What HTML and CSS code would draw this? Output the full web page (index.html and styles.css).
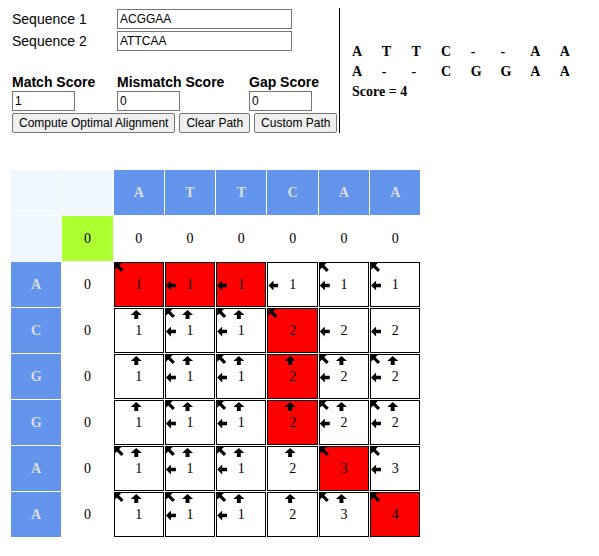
FILE: index.html
```html
<!DOCTYPE html>
<html>
<head>
<meta charset="utf-8">
<title>Sequence Alignment</title>
<link rel="stylesheet" href="styles.css">
</head>
<body>
<div class="top">
  <div class="controls">
    <div class="seqs">
      <label class="seq-label">Sequence 1</label>
      <input class="seq-input" type="text" value="ACGGAA">
      <label class="seq-label">Sequence 2</label>
      <input class="seq-input" type="text" value="ATTCAA">
    </div>
    <div class="scores">
      <div class="score-col">
        <span class="score-label">Match Score</span>
        <input class="score-input" type="text" value="1">
      </div>
      <div class="score-col">
        <span class="score-label">Mismatch Score</span>
        <input class="score-input" type="text" value="0">
      </div>
      <div class="score-col">
        <span class="score-label">Gap Score</span>
        <input class="score-input" type="text" value="0">
      </div>
    </div>
    <div class="buttons">
      <button class="btn">Compute Optimal Alignment</button>
      <button class="btn">Clear Path</button>
      <button class="btn">Custom Path</button>
    </div>
  </div>
  <div class="result">
    <div class="align">
      <span>A</span><span>T</span><span>T</span><span>C</span><span>-</span><span>-</span><span>A</span><span>A</span>
      <span>A</span><span>-</span><span>-</span><span>C</span><span>G</span><span>G</span><span>A</span><span>A</span>
    </div>
    <div class="total">Score = 4</div>
  </div>
</div>

<div class="matrix">
  <div class="c corner"></div><div class="c corner"></div>
  <div class="c head">A</div><div class="c head">T</div><div class="c head">T</div><div class="c head">C</div><div class="c head">A</div><div class="c head">A</div>

  <div class="c corner"></div><div class="c start">0</div>
  <div class="c zero">0</div><div class="c zero">0</div><div class="c zero">0</div><div class="c zero">0</div><div class="c zero">0</div><div class="c zero">0</div>

  <div class="c head">A</div><div class="c zero">0</div>
  <div class="c box path"><i class="ar d"></i>1</div>
  <div class="c box path"><i class="ar l"></i>1</div>
  <div class="c box path"><i class="ar l"></i>1</div>
  <div class="c box"><i class="ar l"></i>1</div>
  <div class="c box"><i class="ar d"></i><i class="ar l"></i>1</div>
  <div class="c box"><i class="ar d"></i><i class="ar l"></i>1</div>

  <div class="c head">C</div><div class="c zero">0</div>
  <div class="c box"><i class="ar u"></i>1</div>
  <div class="c box"><i class="ar d"></i><i class="ar u"></i><i class="ar l"></i>1</div>
  <div class="c box"><i class="ar d"></i><i class="ar u"></i><i class="ar l"></i>1</div>
  <div class="c box path"><i class="ar d"></i>2</div>
  <div class="c box"><i class="ar l"></i>2</div>
  <div class="c box"><i class="ar l"></i>2</div>

  <div class="c head">G</div><div class="c zero">0</div>
  <div class="c box"><i class="ar u"></i>1</div>
  <div class="c box"><i class="ar d"></i><i class="ar u"></i><i class="ar l"></i>1</div>
  <div class="c box"><i class="ar d"></i><i class="ar u"></i><i class="ar l"></i>1</div>
  <div class="c box path"><i class="ar u"></i>2</div>
  <div class="c box"><i class="ar d"></i><i class="ar u"></i><i class="ar l"></i>2</div>
  <div class="c box"><i class="ar d"></i><i class="ar u"></i><i class="ar l"></i>2</div>

  <div class="c head">G</div><div class="c zero">0</div>
  <div class="c box"><i class="ar u"></i>1</div>
  <div class="c box"><i class="ar d"></i><i class="ar u"></i><i class="ar l"></i>1</div>
  <div class="c box"><i class="ar d"></i><i class="ar u"></i><i class="ar l"></i>1</div>
  <div class="c box path"><i class="ar u"></i>2</div>
  <div class="c box"><i class="ar d"></i><i class="ar u"></i><i class="ar l"></i>2</div>
  <div class="c box"><i class="ar d"></i><i class="ar u"></i><i class="ar l"></i>2</div>

  <div class="c head">A</div><div class="c zero">0</div>
  <div class="c box"><i class="ar d"></i><i class="ar u"></i>1</div>
  <div class="c box"><i class="ar d"></i><i class="ar u"></i><i class="ar l"></i>1</div>
  <div class="c box"><i class="ar d"></i><i class="ar u"></i><i class="ar l"></i>1</div>
  <div class="c box"><i class="ar u"></i>2</div>
  <div class="c box path"><i class="ar d"></i>3</div>
  <div class="c box"><i class="ar d"></i><i class="ar l"></i>3</div>

  <div class="c head">A</div><div class="c zero">0</div>
  <div class="c box"><i class="ar d"></i><i class="ar u"></i>1</div>
  <div class="c box"><i class="ar d"></i><i class="ar u"></i><i class="ar l"></i>1</div>
  <div class="c box"><i class="ar d"></i><i class="ar u"></i><i class="ar l"></i>1</div>
  <div class="c box"><i class="ar u"></i>2</div>
  <div class="c box"><i class="ar d"></i><i class="ar u"></i>3</div>
  <div class="c box path"><i class="ar d"></i>4</div>
</div>
</body>
</html>
```

FILE: styles.css
```css
body {
  margin: 8px;
  background: #fff;
  color: #000;
  font-family: "Liberation Sans", Arial, sans-serif;
  font-size: 14px;
}

.top {
  display: flex;
  align-items: flex-start;
}

.controls {
  width: 332px;
  height: 125px;
  padding-left: 4px;
  padding-top: 1px;
  border-right: 1px solid #000;
  box-sizing: border-box;
}

.seqs {
  display: grid;
  grid-template-columns: 105px 175px;
  row-gap: 2px;
  align-items: center;
}

.seq-label {
  line-height: 16px;
}

input, .btn {
  font-family: "Liberation Sans", Arial, sans-serif;
  font-size: 12px;
  color: #000;
  box-sizing: border-box;
  margin: 0;
}

.seq-input, .score-input {
  height: 20px;
  border: 1px solid #767676;
  padding: 0 2px;
  background: #fff;
}

.seq-input {
  width: 175px;
}

.scores {
  display: grid;
  grid-template-columns: 105px 132px 80px;
  margin-top: 23px;
}

.score-col {
  display: flex;
  flex-direction: column;
}

.score-label {
  font-weight: bold;
  line-height: 17px;
}

.score-input {
  width: 63px;
}

.buttons {
  display: flex;
  gap: 4px;
  margin-top: 2px;
}

.btn {
  height: 20px;
  padding: 0 6px;
  border: 1px solid #767676;
  border-radius: 2px;
  background: #efefef;
}

.result {
  padding-left: 12px;
  padding-top: 34px;
  font-family: "Liberation Serif", "Times New Roman", serif;
  font-weight: bold;
  font-size: 14px;
}

.align {
  display: grid;
  grid-template-columns: repeat(8, 29.7px);
  line-height: 20px;
}

.total {
  line-height: 20px;
}

.matrix {
  display: grid;
  grid-template-columns: repeat(8, 50.3px);
  grid-auto-rows: 45px;
  gap: 1px;
  margin: 37px 0 0 3px;
  font-family: "Liberation Serif", "Times New Roman", serif;
  font-size: 14px;
  width: max-content;
}

.c {
  position: relative;
  box-sizing: border-box;
  display: flex;
  align-items: center;
  justify-content: center;
}

.corner {
  background: #f0f8ff;
}

.head {
  background: #6495ed;
  color: #dcdcdc;
  font-weight: bold;
}

.start {
  background: #adff2f;
}

.zero {
  background: #fff;
}

.box {
  border: 1px solid #000;
  background: #fff;
}

.path {
  background: #ff0000;
}

.ar {
  position: absolute;
  background: #000;
}

.d {
  left: 0;
  top: 0;
  width: 9px;
  height: 9px;
  clip-path: polygon(0 0, 75% 0, 50% 25%, 100% 75%, 75% 100%, 25% 50%, 0 75%);
}

.u {
  top: 1px;
  left: calc(50% - 8px);
  width: 11px;
  height: 9px;
  clip-path: polygon(50% 0, 100% 55%, 68% 55%, 68% 100%, 32% 100%, 32% 55%, 0 55%);
}

.l {
  left: 0;
  top: calc(50% - 4px);
  width: 10px;
  height: 10px;
  clip-path: polygon(0 50%, 50% 0, 50% 32%, 100% 32%, 100% 68%, 50% 68%, 50% 100%);
}
```
